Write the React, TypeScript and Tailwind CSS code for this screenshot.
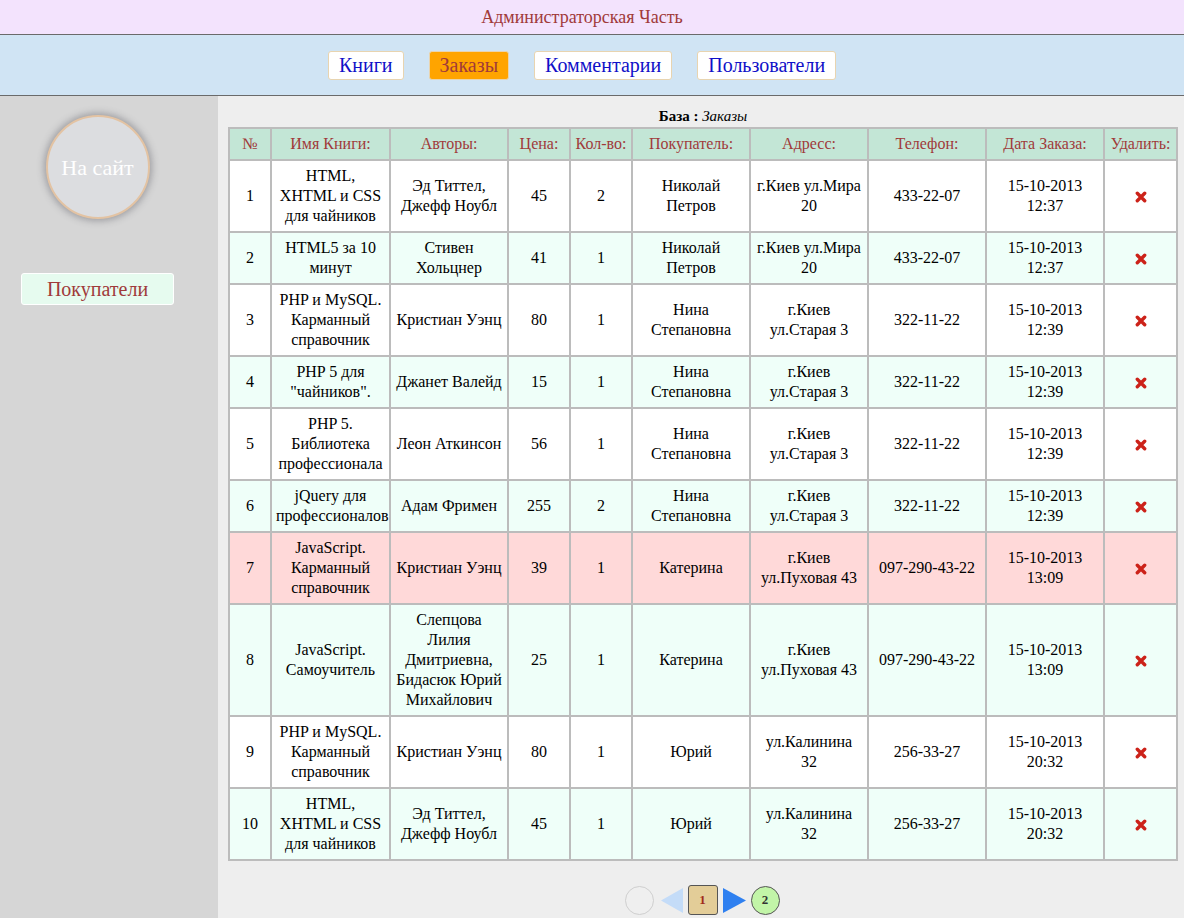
import React from 'react';

type Order = {
  book: string[];
  authors: string[];
  price: string;
  qty: string;
  buyer: string[];
  address: string[];
  phone: string;
  date: string[];
};

const orders: Order[] = [
  { book: ['HTML,', 'XHTML и CSS', 'для чайников'], authors: ['Эд Титтел,', 'Джефф Ноубл'], price: '45', qty: '2', buyer: ['Николай', 'Петров'], address: ['г.Киев ул.Мира', '20'], phone: '433-22-07', date: ['15-10-2013', '12:37'] },
  { book: ['HTML5 за 10', 'минут'], authors: ['Стивен', 'Хольцнер'], price: '41', qty: '1', buyer: ['Николай', 'Петров'], address: ['г.Киев ул.Мира', '20'], phone: '433-22-07', date: ['15-10-2013', '12:37'] },
  { book: ['PHP и MySQL.', 'Карманный', 'справочник'], authors: ['Кристиан Уэнц'], price: '80', qty: '1', buyer: ['Нина', 'Степановна'], address: ['г.Киев', 'ул.Старая 3'], phone: '322-11-22', date: ['15-10-2013', '12:39'] },
  { book: ['PHP 5 для', '"чайников".'], authors: ['Джанет Валейд'], price: '15', qty: '1', buyer: ['Нина', 'Степановна'], address: ['г.Киев', 'ул.Старая 3'], phone: '322-11-22', date: ['15-10-2013', '12:39'] },
  { book: ['PHP 5.', 'Библиотека', 'профессионала'], authors: ['Леон Аткинсон'], price: '56', qty: '1', buyer: ['Нина', 'Степановна'], address: ['г.Киев', 'ул.Старая 3'], phone: '322-11-22', date: ['15-10-2013', '12:39'] },
  { book: ['jQuery для', 'профессионалов'], authors: ['Адам Фримен'], price: '255', qty: '2', buyer: ['Нина', 'Степановна'], address: ['г.Киев', 'ул.Старая 3'], phone: '322-11-22', date: ['15-10-2013', '12:39'] },
  { book: ['JavaScript.', 'Карманный', 'справочник'], authors: ['Кристиан Уэнц'], price: '39', qty: '1', buyer: ['Катерина'], address: ['г.Киев', 'ул.Пуховая 43'], phone: '097-290-43-22', date: ['15-10-2013', '13:09'] },
  { book: ['JavaScript.', 'Самоучитель'], authors: ['Слепцова', 'Лилия', 'Дмитриевна,', 'Бидасюк Юрий', 'Михайлович'], price: '25', qty: '1', buyer: ['Катерина'], address: ['г.Киев', 'ул.Пуховая 43'], phone: '097-290-43-22', date: ['15-10-2013', '13:09'] },
  { book: ['PHP и MySQL.', 'Карманный', 'справочник'], authors: ['Кристиан Уэнц'], price: '80', qty: '1', buyer: ['Юрий'], address: ['ул.Калинина', '32'], phone: '256-33-27', date: ['15-10-2013', '20:32'] },
  { book: ['HTML,', 'XHTML и CSS', 'для чайников'], authors: ['Эд Титтел,', 'Джефф Ноубл'], price: '45', qty: '1', buyer: ['Юрий'], address: ['ул.Калинина', '32'], phone: '256-33-27', date: ['15-10-2013', '20:32'] },
];

const headers = ['№', 'Имя Книги:', 'Авторы:', 'Цена:', 'Кол-во:', 'Покупатель:', 'Адресс:', 'Телефон:', 'Дата Заказа:', 'Удалить:'];
const widths = [42, 119, 118, 62, 62, 118, 118, 118, 118, 73];

function Lines({ lines }: { lines: string[] }) {
  return (
    <>
      {lines.map((l, i) => (
        <div key={i} className="whitespace-nowrap">{l}</div>
      ))}
    </>
  );
}

function DeleteIcon() {
  return (
    <svg width="12" height="12" viewBox="0 0 12 12" className="inline-block">
      <path d="M2.3 2.3 L9.7 9.7 M9.7 2.3 L2.3 9.7" stroke="#cc2219" strokeWidth="3.4" strokeLinecap="round" />
    </svg>
  );
}

const cell = 'border-2 border-[#bcbcbc] px-1 py-[5px] text-center align-middle overflow-hidden';

export default function App() {
  const navItems = ['Книги', 'Заказы', 'Комментарии', 'Пользователи'];

  return (
    <div className="min-h-[918px] flex flex-col font-['Liberation_Serif','Times_New_Roman',serif] bg-[#eeeeee]">
      <div className="h-[35px] bg-[#f3e3fd] border-b border-[#6a6a6a] flex items-center justify-center pr-[20px] text-[18px] text-[#a03a3a]">
        Администраторская Часть
      </div>

      <div className="h-[61px] bg-[#d0e4f4] border-b border-[#6a6a6a] flex items-center justify-center gap-[25px] pr-[20px]">
        {navItems.map((item) => (
          <button
            key={item}
            className={`h-[29px] px-[10px] rounded-[3px] border border-[#e8d4b0] text-[20px] leading-none ${
              item === 'Заказы' ? 'bg-[#ffa400] text-[#a03a3a]' : 'bg-white text-[#1010c8]'
            }`}
          >
            {item}
          </button>
        ))}
      </div>

      <div className="flex flex-1">
        <aside className="w-[218px] shrink-0 bg-[#d6d6d6]">
          <div className="w-[195px] flex flex-col items-center pt-[19px]">
            <div className="w-[104px] h-[104px] rounded-full bg-[#dcdde0] border-2 border-[#e3c3a3] shadow-[0_0_7px_2px_rgba(90,90,100,0.45)] flex items-center justify-center text-white text-[22px]">
              На сайт
            </div>
            <button className="mt-[54px] w-[153px] h-[32px] bg-[#e6fbef] border border-white rounded-[3px] text-[20px] text-[#a03a3a] leading-none">
              Покупатели
            </button>
          </div>
        </aside>

        <main className="flex-1 pl-[10px] pt-[10px]">
          <div className="text-center text-[15px] leading-[21px] text-black pr-[6px]">
            <span className="font-bold">База :</span> <span className="italic">Заказы</span>
          </div>
          <table className="table-fixed border-collapse w-[948px] text-[16px] leading-[20px] text-black">
            <colgroup>
              {widths.map((w, i) => (
                <col key={i} style={{ width: w }} />
              ))}
            </colgroup>
            <thead>
              <tr className="bg-[#c3e6d6]">
                {headers.map((h) => (
                  <th key={h} className={`${cell} font-normal text-[#a03a3a] whitespace-nowrap`}>
                    {h}
                  </th>
                ))}
              </tr>
            </thead>
            <tbody>
              {orders.map((o, i) => {
                const bg = i === 6 ? 'bg-[#ffd9d9]' : i % 2 === 1 ? 'bg-[#effff9]' : 'bg-white';
                return (
                  <tr key={i} className={bg}>
                    <td className={cell}>{i + 1}</td>
                    <td className={cell}><Lines lines={o.book} /></td>
                    <td className={cell}><Lines lines={o.authors} /></td>
                    <td className={cell}>{o.price}</td>
                    <td className={cell}>{o.qty}</td>
                    <td className={cell}><Lines lines={o.buyer} /></td>
                    <td className={cell}><Lines lines={o.address} /></td>
                    <td className={cell}>{o.phone}</td>
                    <td className={cell}><Lines lines={o.date} /></td>
                    <td className={cell}><DeleteIcon /></td>
                  </tr>
                );
              })}
            </tbody>
          </table>

          <div className="flex items-center justify-center gap-[5px] mt-[24px] pr-[8px]">
            <div className="w-[29px] h-[29px] mr-[2px] rounded-full border border-[#cfcfcf] bg-[#efefef]" />
            <svg width="22" height="25" viewBox="0 0 22 25">
              <polygon points="22,0 22,25 0,12.5" fill="#c4dcf8" />
            </svg>
            <div className="w-[30px] h-[30px] rounded-[3px] border border-[#555] bg-[#e3cd98] flex items-center justify-center text-[13px] font-bold text-[#a02a1a]">
              1
            </div>
            <svg width="23" height="25" viewBox="0 0 23 25">
              <polygon points="0,0 0,25 23,12.5" fill="#2f80f0" />
            </svg>
            <div className="w-[29px] h-[29px] rounded-full border border-[#555] bg-[#c2f5a8] flex items-center justify-center text-[13px] font-bold text-[#333]">
              2
            </div>
          </div>
        </main>
      </div>
    </div>
  );
}
